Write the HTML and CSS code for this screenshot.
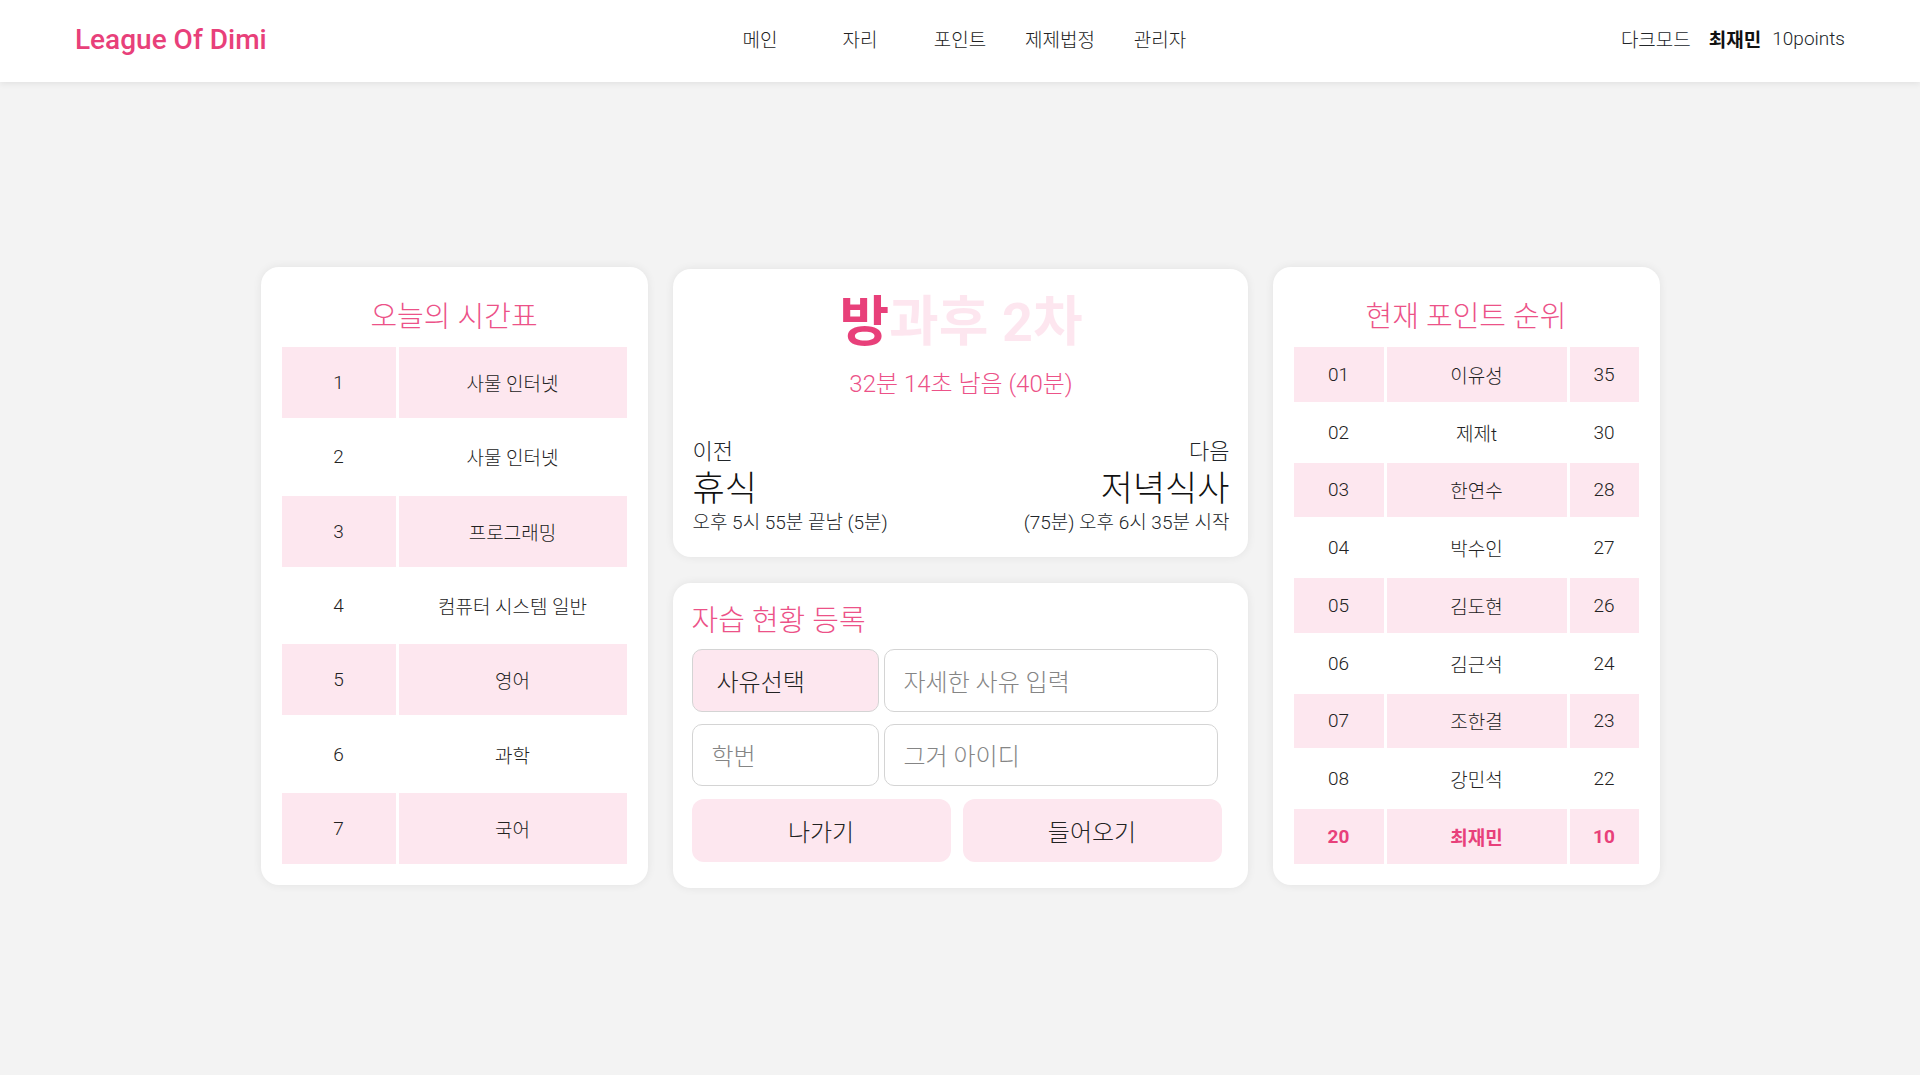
FILE: index.html
```html
<!DOCTYPE html>
<html lang="ko">
<head>
<meta charset="utf-8">
<title>League Of Dimi</title>
<link rel="stylesheet" href="styles.css">
</head>
<body>
<header class="topbar">
  <div class="logo">League Of Dimi</div>
  <nav class="menu">
    <a class="menu-item">메인</a>
    <a class="menu-item">자리</a>
    <a class="menu-item">포인트</a>
    <a class="menu-item">제제법정</a>
    <a class="menu-item">관리자</a>
  </nav>
  <div class="user">
    <span class="dark">다크모드</span>
    <b class="name">최재민</b>
    <span class="points">10points</span>
  </div>
</header>

<main class="board">
  <section class="card side">
    <h2 class="card-title">오늘의 시간표</h2>
    <div class="tt-grid">
      <div class="cell fill">1</div><div class="cell fill">사물 인터넷</div>
      <div class="cell">2</div><div class="cell">사물 인터넷</div>
      <div class="cell fill">3</div><div class="cell fill">프로그래밍</div>
      <div class="cell">4</div><div class="cell">컴퓨터 시스템 일반</div>
      <div class="cell fill">5</div><div class="cell fill">영어</div>
      <div class="cell">6</div><div class="cell">과학</div>
      <div class="cell fill">7</div><div class="cell fill">국어</div>
    </div>
  </section>

  <div class="middle">
    <section class="card now">
      <div class="now-title">방과후 2차</div>
      <div class="now-remain">32분 14초 남음 (40분)</div>
      <div class="sched">
        <div class="sched-col">
          <div class="sched-label">이전</div>
          <div class="sched-name">휴식</div>
          <div class="sched-time">오후 5시 55분 끝남 (5분)</div>
        </div>
        <div class="sched-col right">
          <div class="sched-label">다음</div>
          <div class="sched-name">저녁식사</div>
          <div class="sched-time">(75분) 오후 6시 35분 시작</div>
        </div>
      </div>
    </section>

    <section class="card register">
      <h2 class="reg-title">자습 현황 등록</h2>
      <div class="form-grid">
        <div class="field select">사유선택</div>
        <div class="field placeholder">자세한 사유 입력</div>
        <div class="field placeholder short">학번</div>
        <div class="field placeholder">그거 아이디</div>
      </div>
      <div class="btn-row">
        <button class="btn">나가기</button>
        <button class="btn">들어오기</button>
      </div>
    </section>
  </div>

  <section class="card side">
    <h2 class="card-title">현재 포인트 순위</h2>
    <div class="rank-grid">
      <div class="cell fill">01</div><div class="cell fill">이유성</div><div class="cell fill">35</div>
      <div class="cell">02</div><div class="cell">제제t</div><div class="cell">30</div>
      <div class="cell fill">03</div><div class="cell fill">한연수</div><div class="cell fill">28</div>
      <div class="cell">04</div><div class="cell">박수인</div><div class="cell">27</div>
      <div class="cell fill">05</div><div class="cell fill">김도현</div><div class="cell fill">26</div>
      <div class="cell">06</div><div class="cell">김근석</div><div class="cell">24</div>
      <div class="cell fill">07</div><div class="cell fill">조한결</div><div class="cell fill">23</div>
      <div class="cell">08</div><div class="cell">강민석</div><div class="cell">22</div>
      <div class="cell fill me">20</div><div class="cell fill me">최재민</div><div class="cell fill me">10</div>
    </div>
  </section>
</main>
</body>
</html>
```

FILE: styles.css
```css
* { box-sizing: border-box; }

html, body {
  margin: 0;
  padding: 0;
}

body {
  background: #f3f3f3;
  font-family: "Roboto", "Noto Sans CJK KR", sans-serif;
  color: #212529;
  height: 1075px;
  overflow: hidden;
}

/* header */
.topbar {
  height: 82px;
  background: #ffffff;
  box-shadow: 0 2px 6px rgba(0, 0, 0, 0.07);
  display: grid;
  grid-template-columns: 1fr auto 1fr;
  align-items: center;
  padding: 0 75px;
  position: relative;
  z-index: 1;
}

.logo {
  font-size: 28px;
  font-weight: 500;
  color: #e8407a;
  margin-top: -4px;
}

.menu {
  display: flex;
  margin-top: -6px;
}

.menu-item {
  width: 100px;
  text-align: center;
  font-size: 19px;
  font-weight: 300;
  color: #222;
}

.user {
  justify-self: end;
  display: flex;
  align-items: center;
  font-size: 19px;
  margin-top: -6px;
}

.dark { font-weight: 300; margin-right: 18px; }
.name { font-weight: 700; margin-right: 11px; color: #111; }
.points { font-weight: 300; }

/* board */
.board {
  display: flex;
  justify-content: center;
  align-items: flex-start;
  gap: 25px;
  padding-top: 185px;
}

.card {
  background: #ffffff;
  border-radius: 18px;
  box-shadow: 0 0 10px rgba(0, 0, 0, 0.07);
}

.side {
  width: 387px;
  height: 618px;
  padding: 30px 21px 21px;
  display: flex;
  flex-direction: column;
}

.card-title {
  margin: 0 0 10px;
  font-size: 29px;
  line-height: 40px;
  font-weight: 300;
  text-align: center;
  color: #ec5288;
}

.tt-grid {
  display: grid;
  grid-template-columns: 114px 228px;
  grid-auto-rows: 71.3px;
  gap: 3px;
}

.rank-grid {
  display: grid;
  grid-template-columns: 90px 180px 69px;
  grid-auto-rows: 54.75px;
  gap: 3px;
}

.cell {
  display: flex;
  align-items: center;
  justify-content: center;
  font-size: 19px;
  font-weight: 300;
  color: #222;
}

.cell.fill { background: #fde7ef; }

.cell.me {
  color: #e8407a;
  font-weight: 700;
}

/* middle */
.middle {
  width: 575px;
  margin-top: 2px;
  display: flex;
  flex-direction: column;
  gap: 26px;
}

.now {
  height: 288px;
  padding: 20px 18px 21px 20px;
  display: flex;
  flex-direction: column;
}

.now-title {
  text-align: center;
  font-size: 54px;
  font-weight: 700;
  line-height: 68px;
  background: linear-gradient(to right, #e8407a 20%, #fde6ef 20%);
  -webkit-background-clip: text;
  background-clip: text;
  color: transparent;
  align-self: center;
  white-space: nowrap;
}

.now-remain {
  text-align: center;
  font-size: 24px;
  font-weight: 300;
  line-height: 32px;
  color: #ec5288;
  margin-top: 11px;
}

.sched {
  margin-top: auto;
  display: flex;
  justify-content: space-between;
  align-items: flex-end;
}

.sched-col.right { text-align: right; }

.sched-label {
  font-size: 22px;
  font-weight: 300;
  line-height: 28px;
  margin-bottom: 4px;
}

.sched-name {
  font-size: 35px;
  font-weight: 300;
  line-height: 40px;
  margin-bottom: 0;
  color: #111;
}

.sched-time {
  font-size: 19px;
  font-weight: 300;
  line-height: 26px;
}

.register {
  height: 305px;
  padding: 18px 26px 26px 19px;
  display: flex;
  flex-direction: column;
}

.reg-title {
  margin: 0 0 8px;
  font-size: 29px;
  line-height: 40px;
  font-weight: 300;
  color: #ec5288;
}

.form-grid {
  display: grid;
  grid-template-columns: 187px 334px;
  grid-auto-rows: 62.5px;
  column-gap: 5px;
  row-gap: 12px;
}

.field {
  border: 1px solid #d4d4d4;
  border-radius: 10px;
  display: flex;
  align-items: center;
  padding-left: 19px;
  font-size: 24px;
  font-weight: 300;
}

.field.select {
  background: #fde7ef;
  padding-left: 24px;
  color: #222;
}

.field.placeholder { color: #858585; }

.btn-row {
  display: grid;
  grid-template-columns: 259px 259px;
  gap: 12px;
  margin-top: 13px;
}

.btn {
  height: 63px;
  border: none;
  border-radius: 12px;
  background: #fde7ef;
  font-family: "Roboto", "Noto Sans CJK KR", sans-serif;
  font-size: 24px;
  font-weight: 300;
  color: #222;
}
```
